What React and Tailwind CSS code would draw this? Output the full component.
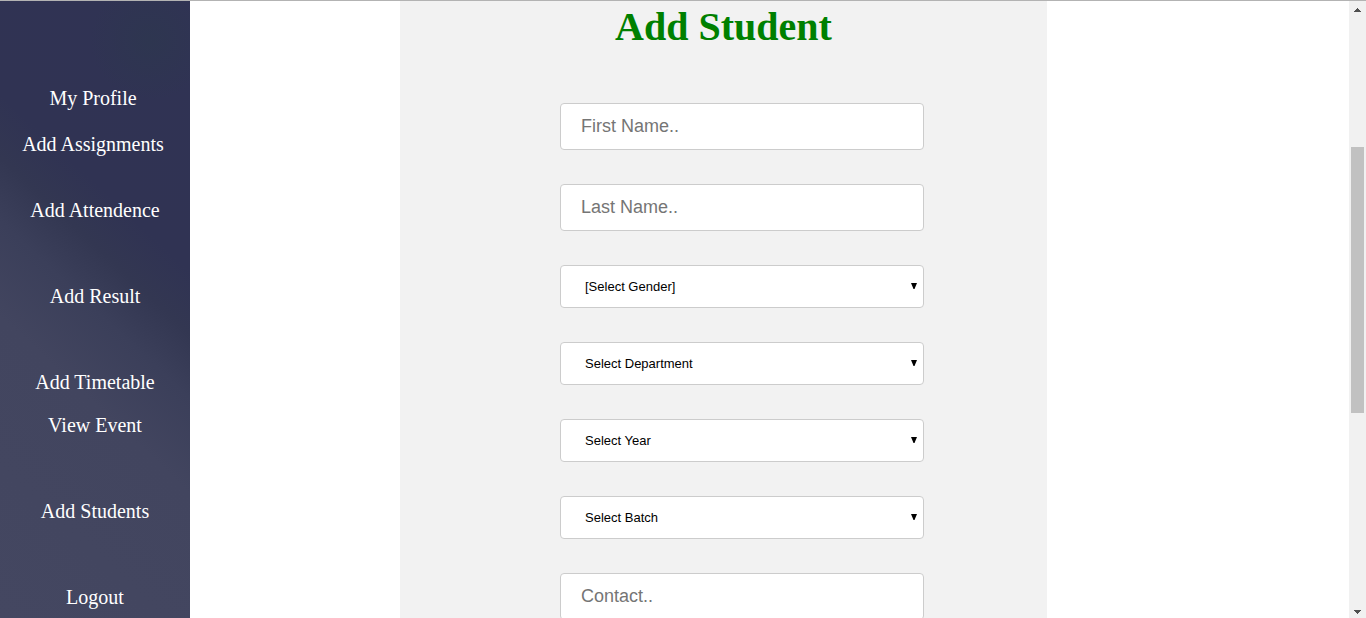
import React from "react";

const links = [
  { label: "My Profile", style: "mr-1" },
  { label: "Add Assignments", style: "mt-[23px] mr-1" },
  { label: "Add Attendence", style: "mt-[43px]" },
  { label: "Add Result", style: "mt-[63px]" },
  { label: "Add Timetable", style: "mt-[63px]" },
  { label: "View Event", style: "mt-5" },
  { label: "Add Students", style: "mt-[63px]" },
  { label: "Logout", style: "mt-[63px]" },
];

const selects = [
  { label: "Gender", options: ["[Select Gender]", "Male", "Female"] },
  { label: "Department", options: ["Select Department"] },
  { label: "Year", options: ["Select Year"] },
  { label: "Batch", options: ["Select Batch"] },
];

function Sidebar() {
  return (
    <nav
      aria-label="Main"
      className="flex w-[190px] shrink-0 flex-col items-center bg-[radial-gradient(ellipse_60px_60px_at_150px_40px,#2e3650_0%,#2e365000_100%),linear-gradient(223deg,#303354_0%,#303353_34%,#333752_42%,#3b3f5a_50%,#42455f_62%,#444761_100%)] pt-[86px]"
    >
      {links.map((link) => (
        <a
          key={link.label}
          href="#"
          className={`shrink-0 font-['Liberation_Serif',serif] text-[20px] leading-[23px] whitespace-nowrap text-white ${link.style}`}
        >
          {link.label}
        </a>
      ))}
    </nav>
  );
}

function TextField({ label }) {
  return (
    <input
      type="text"
      aria-label={label}
      placeholder={`${label}..`}
      className="h-[47px] w-full shrink-0 rounded-[4px] border border-[#cccccc] bg-white px-5 font-['Liberation_Sans',sans-serif] text-[18px] text-black placeholder:text-[#757575]"
    />
  );
}

function SelectField({ label, options }) {
  return (
    <div className="relative w-full shrink-0">
      <select
        aria-label={label}
        className="block h-[43px] w-full appearance-none rounded-[4px] border border-[#cccccc] bg-white px-6 font-['Liberation_Sans',sans-serif] text-[13px] text-black"
      >
        {options.map((option) => (
          <option key={option}>{option}</option>
        ))}
      </select>
      <svg
        aria-hidden="true"
        viewBox="0 0 6 6"
        className="pointer-events-none absolute top-[18px] right-[7px] size-[6px]"
      >
        <path d="M0 0H6L3.5 6H2.5Z" fill="#000" />
      </svg>
    </div>
  );
}

function ScrollRail() {
  return (
    <div aria-hidden="true" className="flex w-[17px] shrink-0 flex-col items-center bg-[#f1f1f1]">
      <svg viewBox="0 0 17 17" className="size-[17px] shrink-0" shapeRendering="crispEdges">
        <path d="M8 7h1v1h1v1h1v1h1v1H5v-1h1V9h1V8h1z" fill="#505050" />
      </svg>
      <div className="flex w-full flex-1 flex-col px-0.5 pt-[129px]">
        <div className="h-[266px] bg-[#c1c1c1]" />
      </div>
      <svg viewBox="0 0 17 17" className="size-[17px] shrink-0" shapeRendering="crispEdges">
        <path d="M5 9h7v1h-1v1h-1v1H9v1H8v-1H7v-1H6v-1H5z" fill="#505050" />
      </svg>
    </div>
  );
}

export default function App() {
  return (
    <div className="flex h-screen overflow-hidden border-t border-[#b3b3b3] bg-white">
      <Sidebar />
      <main className="flex min-w-0 flex-1 pr-[302px] pl-[210px]">
        <form className="min-w-0 flex-1 bg-[#f2f2f2]">
          <h1 className="pt-[3px] text-center font-['Liberation_Serif',serif] text-[40px] leading-[46px] font-bold text-[#008000]">
            Add Student
          </h1>
          <div className="flex flex-col gap-[34px] pt-[53px] pr-[123px] pl-[160px]">
            <TextField label="First Name" />
            <TextField label="Last Name" />
            {selects.map((select) => (
              <SelectField key={select.label} label={select.label} options={select.options} />
            ))}
            <TextField label="Contact" />
          </div>
        </form>
      </main>
      <ScrollRail />
    </div>
  );
}
